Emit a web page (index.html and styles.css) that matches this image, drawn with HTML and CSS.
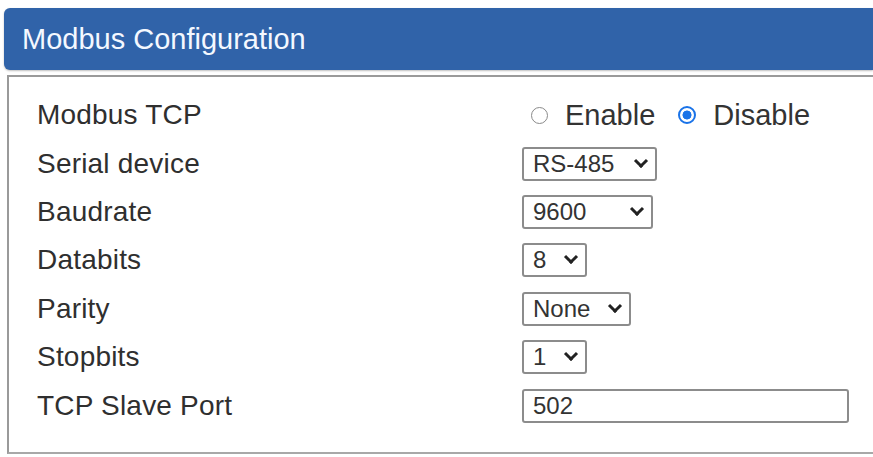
FILE: index.html
```html
<!DOCTYPE html>
<html>
<head>
<meta charset="utf-8">
<link rel="stylesheet" href="styles.css">
</head>
<body>
<div class="page">
  <div class="header">Modbus Configuration</div>
  <div class="panel">
    <div class="row">
      <div class="label">Modbus TCP</div>
      <div class="ctrl radios">
        <label class="radio"><span class="dot"></span>Enable</label>
        <label class="radio"><span class="dot on"></span>Disable</label>
      </div>
    </div>
    <div class="row">
      <div class="label">Serial device</div>
      <div class="ctrl"><span class="sel w-rs">RS-485<span class="chev"></span></span></div>
    </div>
    <div class="row">
      <div class="label">Baudrate</div>
      <div class="ctrl"><span class="sel w-baud">9600<span class="chev"></span></span></div>
    </div>
    <div class="row">
      <div class="label">Databits</div>
      <div class="ctrl"><span class="sel w-one">8<span class="chev"></span></span></div>
    </div>
    <div class="row">
      <div class="label">Parity</div>
      <div class="ctrl"><span class="sel w-none">None<span class="chev"></span></span></div>
    </div>
    <div class="row">
      <div class="label">Stopbits</div>
      <div class="ctrl"><span class="sel w-one">1<span class="chev"></span></span></div>
    </div>
    <div class="row">
      <div class="label">TCP Slave Port</div>
      <div class="ctrl"><span class="input">502</span></div>
    </div>
  </div>
</div>
</body>
</html>
```
FILE: styles.css
```css
html, body {
  margin: 0;
  padding: 0;
  background: #ffffff;
  font-family: "Liberation Sans", Arial, sans-serif;
  overflow: hidden;
}
.page {
  padding-top: 8px;
  width: 873px;
  height: 457px;
  box-sizing: border-box;
}
.header {
  margin-left: 4px;
  height: 62px;
  box-sizing: border-box;
  background: #3063a9;
  color: #f4f8ff;
  font-size: 29px;
  padding-left: 18px;
  line-height: 62px;
  border-radius: 6px 0 0 6px;
  box-shadow: 0 1px 2px rgba(0,0,0,0.25);
}
.panel {
  margin-top: 5px;
  margin-left: 7px;
  height: 379px;
  box-sizing: border-box;
  border-top: 2px solid #9a9a9a;
  border-left: 2px solid #9a9a9a;
  border-bottom: 2px solid #a8a8a8;
  padding-top: 14px;
  padding-left: 28px;
}
.row {
  display: grid;
  grid-template-columns: 485px 1fr;
  align-items: center;
  height: 48.4px;
}
.label {
  font-size: 28px;
  letter-spacing: 0.2px;
  color: #2f2f2f;
}
.ctrl {
  display: flex;
  align-items: center;
}
.radios {
  padding-left: 9px;
}
.radio {
  display: flex;
  align-items: center;
  font-size: 29px;
  color: #333;
}
.dot {
  width: 17px;
  height: 17px;
  border-radius: 50%;
  border: 1.5px solid #8a8a8a;
  box-sizing: border-box;
  margin-right: 17px;
  background: #fff;
}
.dot.on {
  width: 18px;
  height: 18px;
  border: 2px solid #1a73e8;
  background: radial-gradient(circle, #1a73e8 0 4.2px, #fff 4.8px);
  margin-right: 17px;
}
.radio + .radio {
  margin-left: 23px;
}
.sel, .input {
  display: flex;
  align-items: center;
  height: 34px;
  box-sizing: border-box;
  border: 2px solid #8c8c8c;
  border-radius: 3px;
  font-size: 24px;
  color: #333;
  padding-left: 9px;
  background: #fff;
}
.sel {
  justify-content: space-between;
  padding-right: 9px;
}
.w-rs { width: 135px; }
.w-baud { width: 131px; }
.w-one { width: 65px; }
.w-none { width: 109px; }
.input { width: 327px; }
.chev {
  width: 10px;
  height: 10px;
  border-right: 3px solid #222;
  border-bottom: 3px solid #222;
  transform: translateY(-3px) rotate(45deg);
  box-sizing: border-box;
  margin-left: 6px;
}
```
